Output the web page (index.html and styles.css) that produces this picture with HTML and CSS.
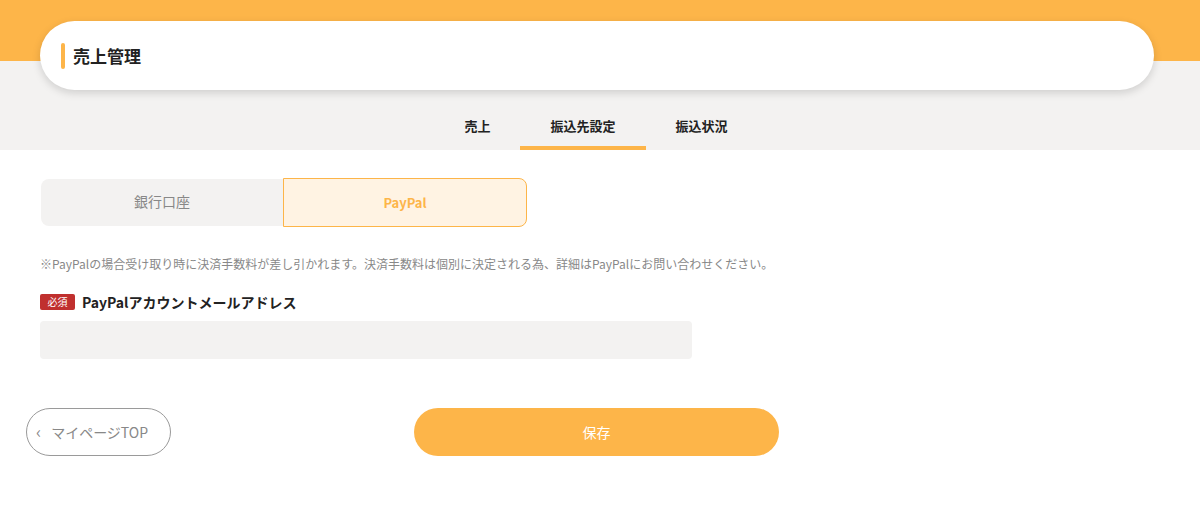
FILE: index.html
```html
<!DOCTYPE html>
<html lang="ja">
<head>
<meta charset="utf-8">
<title>売上管理</title>
<link rel="stylesheet" href="styles.css">
</head>
<body>
<div class="hero">
  <div class="title-card">
    <span class="title-bar"></span>
    <h1 class="title">売上管理</h1>
  </div>
  <nav class="tabs">
    <a class="tab">売上</a>
    <a class="tab tab-active">振込先設定</a>
    <a class="tab">振込状況</a>
  </nav>
</div>
<main class="content">
  <div class="toggle">
    <div class="toggle-item">銀行口座</div>
    <div class="toggle-item toggle-active">PayPal</div>
  </div>
  <p class="note">※PayPalの場合受け取り時に決済手数料が差し引かれます。決済手数料は個別に決定される為、詳細はPayPalにお問い合わせください。</p>
  <div class="field-label"><span class="badge">必須</span><span class="label-text">PayPalアカウントメールアドレス</span></div>
  <div class="input"></div>
  <div class="actions">
    <a class="back-btn"><span class="chev">‹</span>マイページTOP</a>
    <a class="save-btn">保存</a>
  </div>
</main>
</body>
</html>
```
FILE: styles.css
```css
* { box-sizing: border-box; }
html, body { margin: 0; padding: 0; background: #fff; }
body {
  font-family: "Noto Sans CJK JP", "Noto Sans", sans-serif;
  color: #222;
  width: 1200px;
}
.hero {
  background: linear-gradient(#fdb549 0, #fdb549 61px, #f3f2f1 61px, #f3f2f1 100%);
  padding: 21px 46px 0 40px;
}
.title-card {
  height: 69px;
  background: #fff;
  border-radius: 35px;
  box-shadow: 0 3px 8px rgba(0, 0, 0, 0.15);
  display: flex;
  align-items: center;
  padding-left: 21px;
}
.title-bar {
  width: 4px;
  height: 26px;
  border-radius: 2px;
  background: #fdb549;
  margin-right: 8px;
}
.title {
  margin: 0;
  font-size: 17px;
  font-weight: 700;
  line-height: 24px;
  color: #222;
}
.tabs {
  display: flex;
  justify-content: center;
  margin-right: -40px;
  margin-left: -40px;
  padding-right: 2px;
}
.tab {
  padding: 26px 30px 10px;
  font-size: 13px;
  font-weight: 700;
  line-height: 20px;
  color: #222;
  border-bottom: 4px solid transparent;
}
.tab-active { border-bottom-color: #fdb549; }
.content {
  padding: 28px 0 0 40px;
}
.toggle {
  display: flex;
  width: 487px;
  align-items: center;
}
.toggle-item {
  flex: 1;
  height: 47px;
  display: flex;
  align-items: center;
  justify-content: center;
  background: #f3f2f1;
  border-radius: 8px 0 0 8px;
  font-size: 14px;
  color: #888;
  margin-left: 1px;
  padding-bottom: 4px;
}
.toggle-active {
  height: 49px;
  margin-left: 0;
  padding-bottom: 0;
  background: #fff3e3;
  border: 1px solid #fdb549;
  border-radius: 0 8px 8px 0;
  color: #fdb549;
  font-weight: 700;
  font-size: 13px;
}
.note {
  margin: 28px 0 0;
  font-size: 12px;
  line-height: 18px;
  color: #888;
}
.field-label {
  display: flex;
  align-items: center;
  margin-top: 19px;
}
.badge {
  width: 35px;
  height: 16px;
  background: #c0302e;
  color: #fff;
  font-size: 10px;
  line-height: 16px;
  text-align: center;
  border-radius: 2px;
  margin-right: 7px;
}
.label-text {
  font-size: 14px;
  font-weight: 700;
  line-height: 20px;
  color: #222;
}
.input {
  width: 652px;
  height: 38px;
  margin-top: 9px;
  background: #f3f2f1;
  border-radius: 4px;
}
.actions {
  position: relative;
  margin: 49px 0 0 -14px;
  height: 48px;
  width: 1141px;
  display: flex;
  justify-content: center;
}
.back-btn {
  position: absolute;
  left: 0;
  top: 0;
  width: 145px;
  height: 48px;
  border: 1px solid #9a9a9a;
  border-radius: 24px;
  display: flex;
  align-items: center;
  padding-left: 9px;
  font-size: 14px;
  color: #888;
}
.chev {
  font-size: 17px;
  margin-right: 10px;
  line-height: 16px;
  padding-bottom: 2px;
}
.save-btn {
  width: 365px;
  height: 48px;
  border-radius: 24px;
  background: #fdb549;
  color: #fff;
  font-size: 14px;
  display: flex;
  align-items: center;
  justify-content: center;
}
```
